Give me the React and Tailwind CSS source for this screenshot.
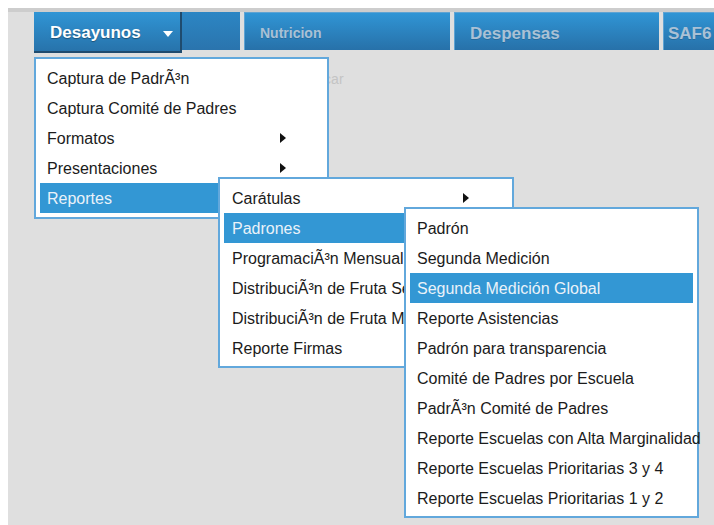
import React from "react";

// -----------------------------------------------------------------------------
// Menu data
// -----------------------------------------------------------------------------
const menuMain = [
  { label: "Captura de PadrÃ³n" },
  { label: "Captura Comité de Padres" },
  { label: "Formatos", sub: true },
  { label: "Presentaciones", sub: true },
  { label: "Reportes", active: true },
];

const menuReportes = [
  { label: "Carátulas", sub: true },
  { label: "Padrones", active: true },
  { label: "ProgramaciÃ³n Mensual" },
  { label: "DistribuciÃ³n de Fruta Seca" },
  { label: "DistribuciÃ³n de Fruta Mensual" },
  { label: "Reporte Firmas" },
];

const menuPadrones = [
  { label: "Padrón" },
  { label: "Segunda Medición" },
  { label: "Segunda Medición Global", active: true },
  { label: "Reporte Asistencias" },
  { label: "Padrón para transparencia" },
  { label: "Comité de Padres por Escuela" },
  { label: "PadrÃ³n Comité de Padres" },
  { label: "Reporte Escuelas con Alta Marginalidad" },
  { label: "Reporte Escuelas Prioritarias 3 y 4" },
  { label: "Reporte Escuelas Prioritarias 1 y 2" },
];

// small black arrow for items with a submenu
const RightArrow = ({ x }) => (
  <svg
    width="6"
    height="10"
    viewBox="0 0 6 10"
    className="absolute top-[10px]"
    style={{ left: x }}
  >
    <path d="M0 0 L6 5 L0 10 Z" fill="#111" />
  </svg>
);

const MenuItem = ({ item, textPad, arrowX }) => (
  <div
    className={`relative h-[30px] flex items-center pt-[1px] whitespace-nowrap ${textPad} ${
      item.active ? "bg-[#3397d4] text-[#eaf2f9]" : "text-[#1b1b1b]"
    }`}
  >
    {item.label}
    {item.sub && <RightArrow x={arrowX} />}
  </div>
);

const TabText = ({ children, size }) => (
  <span
    className={`font-bold text-[#aac1d5] ${size}`}
    style={{ textShadow: "0 1px 0 rgba(0,0,0,0.15)" }}
  >
    {children}
  </span>
);

// -----------------------------------------------------------------------------
// App
// -----------------------------------------------------------------------------
const App = () => {
  return (
    <div
      className="relative w-[714px] h-[525px] bg-white pl-2 pt-2 overflow-hidden"
      style={{ fontFamily: '"Liberation Sans", Arial, sans-serif' }}
    >
      <div className="h-full bg-[#dfdfdf] border-t-4 border-[#cdcdcd]">
        {/* top nav */}
        <div className="flex gap-1 pl-[26px]">
          {/* tab 1 with the open button */}
          <div className="relative shrink-0 w-[206px] h-[38px] bg-linear-to-b from-[#2c86c4] to-[#2a74ad]">
            <div className="absolute left-0 top-0 w-[148px] h-[41px] bg-linear-to-b from-[#3095d5] to-[#2773ab] border-r-2 border-b-2 border-[#1f4b6e] flex items-center pl-4 pt-[3px]">
              <span
                className="text-[17px] font-bold text-white"
                style={{ textShadow: "0 1px 1px rgba(0,0,0,0.35)" }}
              >
                Desayunos
              </span>
              <svg width="10" height="6" viewBox="0 0 10 6" className="ml-[22px] mt-[2px]">
                <path d="M0 0 L10 0 L5 6 Z" fill="#fff" />
              </svg>
            </div>
          </div>
          <div className="shrink-0 w-[206px] h-[38px] bg-linear-to-b from-[#3095d5] to-[#2771a9] border-t border-l border-[#5ea3d3] flex items-center pl-[15px] pt-1">
            <TabText size="text-[14px]">Nutricion</TabText>
          </div>
          <div className="shrink-0 w-[205px] h-[38px] bg-linear-to-b from-[#3095d5] to-[#2771a9] border-t border-l border-[#5ea3d3] flex items-center pl-[15px] pt-1">
            <TabText size="text-[17px]">Despensas</TabText>
          </div>
          <div className="shrink-0 w-[205px] h-[38px] bg-linear-to-b from-[#3095d5] to-[#2771a9] border-t border-l border-[#5ea3d3] flex items-center pl-[4px] pt-1">
            <TabText size="text-[17px]">SAF6</TabText>
          </div>
        </div>

        {/* content behind the menus */}
        <div className="pl-[292px] pt-[19px] text-[14px] text-[#c4c4c4]">Buscar</div>
      </div>

      {/* level 1 menu */}
      <div className="absolute left-[34px] top-[57px] w-[295px] h-[162px] bg-white border-2 border-[#62a8dc] px-1 pt-1 text-[16px]">
        {menuMain.map((item) => (
          <MenuItem key={item.label} item={item} textPad="pl-[7px]" arrowX={240} />
        ))}
      </div>

      {/* level 2 menu */}
      <div className="absolute left-[218px] top-[177px] w-[296px] h-[191px] bg-white border-2 border-[#62a8dc] px-1 pt-1 text-[16px]">
        {menuReportes.map((item) => (
          <MenuItem key={item.label} item={item} textPad="pl-2" arrowX={239} />
        ))}
      </div>

      {/* level 3 menu */}
      <div className="absolute left-[404px] top-[207px] w-[295px] h-[311px] bg-white border-2 border-[#62a8dc] px-1 pt-1 text-[16px]">
        {menuPadrones.map((item) => (
          <MenuItem key={item.label} item={item} textPad="pl-[7px]" arrowX={0} />
        ))}
      </div>
    </div>
  );
};

export default App;
